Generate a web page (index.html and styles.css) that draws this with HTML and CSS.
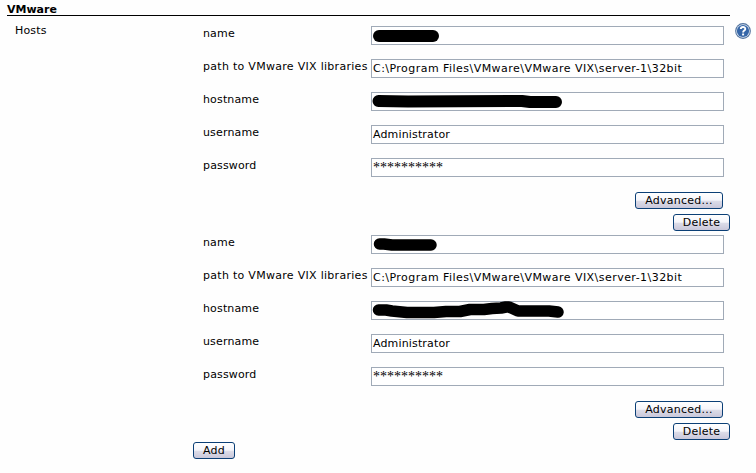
FILE: index.html
```html
<!DOCTYPE html>
<html lang="en">
<head>
<meta charset="utf-8">
<title>VMware</title>
<link rel="stylesheet" href="styles.css">
</head>
<body>
<h1 class="section-title"><span class="title-text">VMware</span></h1>
<main class="section">
  <div class="section-label">Hosts</div>
  <div class="hosts">
    <section class="host">
      <div class="row"><label>name</label><div class="field"><svg class="redaction" viewBox="0 0 351 17"><path d="M7 9H61" stroke-width="12"/></svg></div></div>
      <div class="row"><label class="w-path">path to VMware VIX libraries</label><div class="field"><span class="w-value">C:\Program Files\VMware\VMware VIX\server-1\32bit</span></div></div>
      <div class="row"><label>hostname</label><div class="field"><svg class="redaction" viewBox="0 0 351 17"><path d="M6.5 8L36 8.5L150 8L158 9H184" stroke-width="12"/></svg></div></div>
      <div class="row"><label>username</label><div class="field"><span>Administrator</span></div></div>
      <div class="row"><label>password</label><div class="field"><span class="stars">**********</span></div></div>
      <div class="actions"><button class="advanced"><span>Advanced...</span></button><button class="delete"><span>Delete</span></button></div>
    </section>
    <section class="host">
      <div class="row"><label>name</label><div class="field"><svg class="redaction" viewBox="0 0 351 17"><path d="M7.5 8H12L20 9H59" stroke-width="11.5"/></svg></div></div>
      <div class="row"><label class="w-path">path to VMware VIX libraries</label><div class="field"><span class="w-value">C:\Program Files\VMware\VMware VIX\server-1\32bit</span></div></div>
      <div class="row"><label>hostname</label><div class="field"><svg class="redaction" viewBox="0 0 351 17"><path d="M6.5 8H14L20 9L35 10.5H62L74 9.5H88L98 7.5H112L120 6.5L129 6L134 5H137L146 9H177L186 10" stroke-width="11.5"/></svg></div></div>
      <div class="row"><label>username</label><div class="field"><span>Administrator</span></div></div>
      <div class="row"><label>password</label><div class="field"><span class="stars">**********</span></div></div>
      <div class="actions"><button class="advanced"><span>Advanced...</span></button><button class="delete"><span>Delete</span></button></div>
    </section>
    <button class="add"><span>Add</span></button>
  </div>
  <svg class="help" viewBox="0 0 16 16" role="img" aria-label="Help">
    <circle cx="8" cy="8" r="7.9" fill="#53749f"/>
    <circle cx="8" cy="8" r="6.8" fill="#dce6f2"/>
    <circle cx="8" cy="8" r="6.1" fill="#3566a8"/>
    <path d="M5.8 6.1C5.8 3.2 10.3 3.3 10.3 5.9C10.3 7.5 8.1 7.6 8.1 9.4" fill="none" stroke="#fff" stroke-width="1.9"/>
    <rect x="7.1" y="10.5" width="2" height="1.9" fill="#fff"/>
  </svg>
</main>
</body>
</html>
```

FILE: styles.css
```css
* { box-sizing: border-box; }
body {
  margin: 0;
  width: 756px;
  height: 473px;
  overflow: hidden;
  background: #fefefe;
  color: #000;
  font: 11px/14px "DejaVu Sans", Verdana, sans-serif;
  letter-spacing: 0.15px;
}
.section-title {
  width: 723px;
  height: 14px;
  margin: 2px 0 0 7px;
  border-bottom: 1px solid #000;
  font-size: 11px;
  line-height: 15px;
  letter-spacing: 0;
}
.section { display: flex; align-items: flex-start; }
.section-label { width: 193px; padding: 8px 0 0 15px; }
.hosts { width: 537px; padding-top: 10px; }
.host { height: 209px; }
.row { display: flex; height: 33px; }
.row label { width: 178px; padding: 1px 0 0 10px; white-space: nowrap; }
.row .w-path { letter-spacing: 0.29px; }
.field {
  width: 353px;
  height: 19px;
  padding: 2px 1px;
  border: 1px solid #a0aab7;
  background: #fff;
  white-space: nowrap;
}
.field span { display: block; }
.field .w-value { letter-spacing: 0.46px; }
.redaction {
  display: block;
  width: 351px;
  height: 17px;
  margin: -2px -1px;
  overflow: visible;
  fill: none;
  stroke: #000;
  stroke-linecap: round;
  stroke-linejoin: round;
}
.field .stars { font: 14px/14px "Liberation Serif", serif; letter-spacing: 0; }
.actions { display: flex; flex-direction: column; align-items: flex-end; gap: 5px; padding-top: 1px; }
button {
  display: flex;
  align-items: center;
  justify-content: center;
  height: 17px;
  padding: 1px 0 0;
  border: 1px solid #0b3f76;
  border-radius: 3px;
  background: linear-gradient(#fff 0%, #f5f5fa 48%, #dcdce8 55%, #c9c7da 100%);
  color: #000;
  font: inherit;
  letter-spacing: 0.25px;
}
.advanced { width: 88px; margin-right: 7px; }
.delete { width: 57px; }
.add { width: 42px; margin-top: -2px; }
.help { width: 16px; height: 16px; margin: 7px 0 0 5px; }
```
